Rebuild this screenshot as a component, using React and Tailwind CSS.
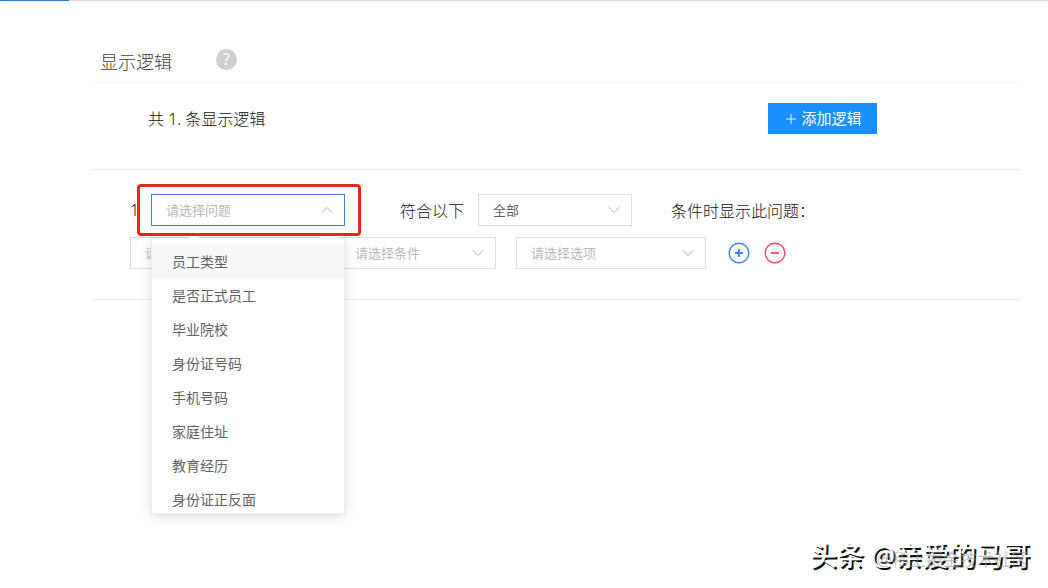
import { useState } from 'react'
import { ChevronDown, ChevronUp, Plus } from 'lucide-react'

const QUESTIONS = [
  '员工类型',
  '是否正式员工',
  '毕业院校',
  '身份证号码',
  '手机号码',
  '家庭住址',
  '教育经历',
  '身份证正反面',
]

function Select({ label, placeholder, options = [], open = false, className }) {
  const [value, setValue] = useState(placeholder ? '' : options[0])
  const Chevron = open ? ChevronUp : ChevronDown

  return (
    <div className={`relative shrink-0 ${className}`}>
      <select
        aria-label={label}
        value={value}
        onChange={(e) => setValue(e.target.value)}
        className={`h-8 w-full appearance-none border bg-white pl-3.5 pr-8 text-[13px] leading-5 outline-none ${
          open ? 'border-[#2d8cdb]' : 'border-[#dcdfe6]'
        } ${value ? 'text-[#606266]' : 'text-[#b8bbc2]'}`}
      >
        {placeholder && <option value="">{placeholder}</option>}
        {options.map((o) => (
          <option key={o}>{o}</option>
        ))}
      </select>
      <Chevron
        size={20}
        strokeWidth={1.1}
        className="pointer-events-none absolute right-2 top-1.5 text-[#a9acb3]"
      />
    </div>
  )
}

function QuestionMenu() {
  return (
    <div className="absolute left-0 top-full z-10 mt-3 w-full border border-[#ebedf0] bg-white shadow-[0_2px_12px_rgba(0,0,0,0.14)]">
      <span className="absolute -top-1.5 left-9 border-x-[6px] border-b-[6px] border-x-transparent border-b-white" />
      <ul role="listbox" aria-label="问题" className="h-[274px] overflow-hidden pt-1.5">
        {QUESTIONS.map((q, i) => (
          <li
            key={q}
            role="option"
            aria-selected={i === 0}
            className={`h-[34px] px-5 text-sm leading-[34px] text-[#606266] ${i === 0 ? 'bg-[#f7f8fa]' : ''}`}
          >
            {q}
          </li>
        ))}
      </ul>
    </div>
  )
}

export default function App() {
  return (
    <div className="relative min-h-screen bg-white font-['Noto_Sans','Noto_Sans_CJK_SC',sans-serif] text-[#303133]">
      {/* top progress line */}
      <div className="h-px bg-[#dcdcde] shadow-[0_1px_3px_rgba(0,0,0,0.15)]">
        <div className="h-px w-[69px] bg-[#2f7fd0]" />
      </div>

      <main className="ml-[92px] mr-[27px]">
        <header className="flex h-[82px] items-end gap-11 border-b border-[#f7f7f7] pb-2 pl-2">
          <h1 className="text-lg font-light leading-6 text-[#404040]">显示逻辑</h1>
          <button
            type="button"
            aria-label="帮助"
            className="mb-1 size-[21px] rounded-full bg-[#cfcfcf] text-base leading-[21px] text-white"
          >
            ?
          </button>
        </header>

        <div className="flex h-[87px] items-start justify-between border-b border-[#ededed] pl-14 pr-36 pt-5">
          <p className="text-base font-light leading-8 text-[#111]">共 1. 条显示逻辑</p>
          <button
            type="button"
            className="flex h-[31px] w-[109px] items-center justify-center gap-0.5 bg-[#1890ff] text-[15px] text-white"
          >
            <Plus size={16} strokeWidth={1.4} />
            添加逻辑
          </button>
        </div>

        <section className="h-[130px] border-b border-[#ededed] pl-[38px] pt-6">
          <div className="flex h-8 items-center text-base font-light text-[#111]">
            <span className="w-[21px]">1</span>
            <div className="relative w-[194px] font-normal">
              <Select label="选择问题" placeholder="请选择问题" options={QUESTIONS} open className="w-full" />
              {/* highlight frame */}
              <div className="pointer-events-none absolute -bottom-2.5 -left-3.5 -right-4 -top-2.5 z-20 rounded-sm border-3 border-[#e8271b]" />
              <QuestionMenu />
            </div>
            <span className="ml-[55px] pt-0.5">符合以下</span>
            <Select label="匹配方式" options={['全部', '任一']} className="ml-3.5 w-[154px] font-normal" />
            <span className="ml-[39px] pt-0.5">条件时显示此问题：</span>
          </div>

          <div className="mt-[11px] flex items-center gap-5">
            <Select label="问题" placeholder="请选择问题" className="w-[190px]" />
            <Select label="条件" placeholder="请选择条件" className="w-[156px]" />
            <Select label="选项" placeholder="请选择选项" className="w-[190px]" />
            <div className="flex gap-3.5 pl-0.5">
              <button type="button" aria-label="添加条件" className="text-[#3b86e8]">
                <svg width="22" height="22" viewBox="0 0 22 22" fill="none" stroke="currentColor">
                  <circle cx="11" cy="11" r="9.8" strokeWidth="1.4" />
                  <path d="M11 7v8M7 11h8" strokeWidth="1.8" />
                </svg>
              </button>
              <button type="button" aria-label="删除条件" className="text-[#ef4b53]">
                <svg width="22" height="22" viewBox="0 0 22 22" fill="none" stroke="currentColor">
                  <circle cx="11" cy="11" r="9.8" strokeWidth="1.4" />
                  <path d="M7 11h8" strokeWidth="1.8" />
                </svg>
              </button>
            </div>
          </div>
        </section>
      </main>

      {/* watermarks */}
      <p className="absolute bottom-3.5 right-[18px] text-[27px] font-medium leading-9 text-white [text-shadow:2px_2px_0_#111]">
        头条 @亲爱的马哥
      </p>
      <p className="absolute bottom-4 right-5 text-[17px] leading-6 text-[#999]/60">@稀土掘金技术社区</p>
    </div>
  )
}
